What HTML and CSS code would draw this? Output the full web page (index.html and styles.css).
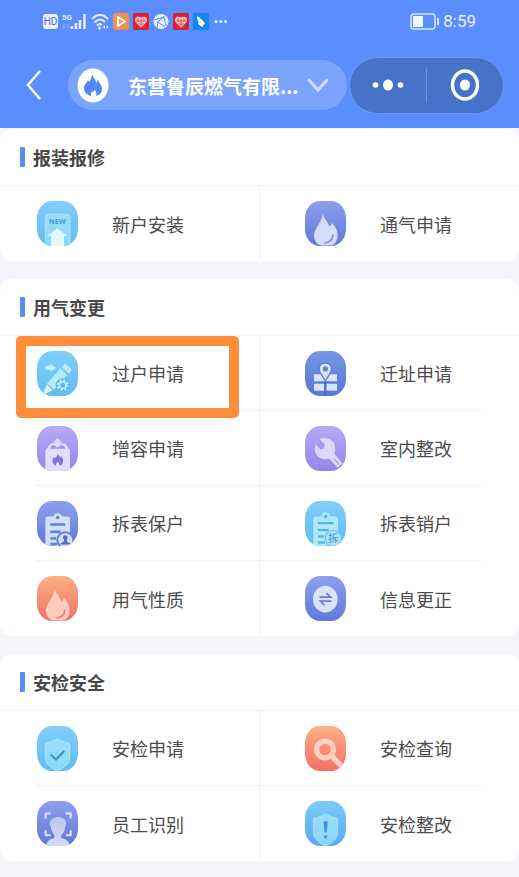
FILE: index.html
```html
<!DOCTYPE html>
<html lang="zh-CN">
<head>
    <meta charset="UTF-8">
    <meta name="viewport" content="width=device-width, initial-scale=1.0">
    <title>燃气服务</title>
    <link rel="stylesheet" href="styles.css">
</head>
<body>
<!-- shared shapes -->
<svg class="sprite" width="0" height="0" aria-hidden="true">
    <defs>
        <linearGradient id="glass" x1="0" y1="0" x2="0" y2="1">
            <stop offset="0" stop-color="#fff" stop-opacity="0.5"/>
            <stop offset="1" stop-color="#fff" stop-opacity="0.75"/>
        </linearGradient>
        <linearGradient id="glassSoft" x1="0" y1="0" x2="0" y2="1">
            <stop offset="0" stop-color="#a5e3fc" stop-opacity="0.8"/>
            <stop offset="1" stop-color="#8bdcfb" stop-opacity="0.9"/>
        </linearGradient>
    </defs>
    <symbol id="flame" viewBox="0 0 123 132">
        <path d="M53 36C56 52 69 59 73 75C78 73 80 70 80 64C90 74 99 86 98 104C97 123 84 135 63 135C40 135 27 121 27 103C27 80 50 66 53 36z"/>
    </symbol>
    <symbol id="heart" viewBox="0 0 16 17">
        <rect width="16" height="17" rx="2" fill="#d8232f"/>
        <path d="M8 15L2.500 9C0.500 5.500 4 2 8 4.500C12 2 15.500 5.500 13.500 9z" fill="#f7c9cc"/>
        <path d="M5 5v4M8 6v7M11 5v4M3 8h10M5 11h6" fill="none" stroke="#d8232f" stroke-width="0.700"/>
    </symbol>
</svg>

<header class="header">
    <div class="status">
        <div class="status-left">
            <svg width="15" height="17" viewBox="0 0 15 17"><rect y="1" width="15" height="15" rx="3" fill="#e9f1ff"/><text x="7.500" y="12" text-anchor="middle" class="hd">HD</text></svg>
            <svg width="25" height="18" viewBox="0 0 25 18"><text x="0" y="8" class="net">5G</text><path d="M2 12v4M0.500 14l1.500 2 1.500-2M6 16v-4" stroke="#8fb2ff" fill="none"/><path d="M10 17v-3M14 17v-6M18 17V8M22.500 17V2" stroke="#e9f1ff" stroke-width="2.500"/></svg>
            <svg width="18" height="17" viewBox="0 0 18 17"><path d="M1 6Q9-2 17 6M3.500 9.500Q9 4 14 9M6 12.500Q8.500 10 11 12" fill="none" stroke="#e9f1ff" stroke-width="2"/><circle cx="8.500" cy="15" r="1.500" fill="#e9f1ff"/><path d="M12 14l2-2v4zM17.500 14l-2-2v4z" fill="#e9f1ff"/></svg>
            <svg width="16" height="17" viewBox="0 0 16 17"><rect width="16" height="17" rx="3" fill="#f2914d"/><path d="M5 4l7 4.500L5 13z" fill="none" stroke="#fff" stroke-width="2" stroke-linejoin="round"/></svg>
            <svg width="16" height="17"><use href="#heart"/></svg>
            <svg width="16" height="17" viewBox="0 0 16 17"><circle cx="8" cy="8.500" r="7.500" fill="#e9f1ff"/><path d="M1 7l10-3 2 9M11 3L5 9l7 5M5 9l-1 6" fill="none" stroke="#5a8dfb"/></svg>
            <svg width="16" height="17"><use href="#heart"/></svg>
            <svg width="16" height="17" viewBox="0 0 16 17"><rect width="16" height="17" rx="1" fill="#1287f0"/><path d="M4 3c3 2 6 4 8 8l-2 1v2c-2-1-4-1-5-4l1-.5C4.500 7.500 4 5.500 4 3z" fill="#fff"/></svg>
            <svg width="14" height="17" viewBox="0 0 14 17"><g fill="#e9f1ff"><circle cx="3" cy="8.500" r="1.500"/><circle cx="8" cy="8.500" r="1.500"/><circle cx="12.500" cy="8.500" r="1.500"/></g></svg>
        </div>
        <div class="status-right">
            <svg width="29" height="17" viewBox="0 0 29 17"><rect x="1" y="1" width="24" height="15" rx="3" fill="none" stroke="#dce8ff" stroke-width="1.500"/><rect x="3" y="3" width="10" height="11" rx="1" fill="#f2f7ff"/><path d="M28 5v7" stroke="#dce8ff" stroke-width="2"/></svg>
            <span class="time">8:59</span>
        </div>
    </div>
    <nav class="navbar">
        <button class="back" aria-label="返回">
            <svg width="16" height="32" viewBox="0 0 16 32"><path d="M14 2L2 16l12 14" fill="none" stroke="#fff" stroke-width="2.500"/></svg>
        </button>
        <button class="company">
            <svg width="32" height="35" viewBox="0 0 32 35"><ellipse cx="16" cy="17.500" rx="15.500" ry="17" fill="#fff"/><path d="M15 6c1 4 4 5 4 9l2-3c2 4 4 6 4 9 0 4-3 6-6 7 1-3 0-4-1-6-1 2-3 1-4 3v3c-4-1-7-4-7-8 0-4 3-5 4-8l1 2c2-3 3-5 3-8z" fill="#5287f5"/></svg>
            <span class="company-name">东营鲁辰燃气有限...</span>
            <svg width="22" height="15" viewBox="0 0 22 15"><path d="M2 2l9 10 9-10" fill="none" stroke="#cfdfff" stroke-width="3" stroke-linecap="round"/></svg>
        </button>
        <div class="capsule">
            <button aria-label="更多">
                <svg width="32" height="14" viewBox="0 0 32 14"><g fill="#fff"><circle cx="3.500" cy="7" r="2.800"/><ellipse cx="16" cy="7" rx="5" ry="5.500"/><circle cx="28.500" cy="7" r="2.800"/></g></svg>
            </button>
            <button aria-label="关闭">
                <svg width="30" height="32" viewBox="0 0 30 32"><ellipse cx="15" cy="16" rx="12.500" ry="14" fill="none" stroke="#fff" stroke-width="3.500"/><ellipse cx="15" cy="16" rx="5" ry="5.500" fill="#fff"/></svg>
            </button>
        </div>
    </nav>
</header>

<main class="content">
    <section class="card">
        <h2>报装报修</h2>
        <div class="grid">
            <a href="#" class="item">
                <svg class="icon sky" viewBox="0 0 123 132"><rect x="25" y="38" width="74" height="110" rx="9" fill="url(#glassSoft)" stroke="#b9edff" stroke-width="2"/><text x="61" y="67" text-anchor="middle" class="new-tag">NEW</text><path d="M61 81L91 103H81V140H42V103H32z" fill="#e6f8ff"/></svg>
                <span>新户安装</span>
            </a>
            <a href="#" class="item">
                <svg class="icon indigo" viewBox="0 0 123 132"><use href="#flame" fill="#d3dcfb"/><path d="M83 101c0 13-9 23-23 23" fill="none" stroke="#7d90e6" stroke-width="5" stroke-linecap="round"/></svg>
                <span>通气申请</span>
            </a>
        </div>
    </section>

    <section class="card">
        <h2>用气变更</h2>
        <div class="grid">
            <a href="#" class="item marked">
                <svg class="icon sky" viewBox="0 0 123 132">
                    <path d="M25 43H41V37L57 49L41 61V55H25z" fill="#c2f1fc"/>
                    <path d="M80 40Q84 35 89 39L102 52Q106 57 101 61L95 67L74 46z" fill="#b5ebfb"/>
                    <path d="M70 50L91 71L51 113L30 96z" fill="#b5ebfb"/>
                    <path d="M29 99L47 116L25 127Q18 126 22 118z" fill="#d6f6fd"/>
                    <circle cx="77" cy="101" r="21" fill="#5cb7e6"/>
                    <circle cx="77" cy="101" r="15" fill="none" stroke="#c2f1fc" stroke-width="6" stroke-dasharray="6 5.780"/>
                    <circle cx="77" cy="101" r="10" fill="none" stroke="#c2f1fc" stroke-width="5"/>
                </svg>
                <span>过户申请</span>
            </a>
            <a href="#" class="item">
                <svg class="icon blue" viewBox="0 0 123 132">
                    <g fill="#d9e4fc"><rect x="27" y="68" width="69" height="21" rx="2"/><rect x="27" y="97" width="69" height="21" rx="2"/></g>
                    <path d="M61 88L46 64C37 46 47 35 61 35S85 46 76 64z" fill="#d9e4fc" stroke="#5c7ed8" stroke-width="4"/>
                    <circle cx="61" cy="52" r="8" fill="#5c82da"/>
                    <path d="M61 90v42" stroke="#4d6cc8" stroke-width="7"/>
                </svg>
                <span>迁址申请</span>
            </a>
            <a href="#" class="item">
                <svg class="icon violet" viewBox="0 0 123 132">
                    <path d="M25 72L39 53Q41 50 45 50H80Q84 50 86 53L99 72V140H25z" fill="#e3dcff"/>
                    <path d="M38 67L45 57H79L86 67z" fill="#9d8eea"/>
                    <path d="M62 35L76 48H68V62H56V48H48z" fill="#e3dcff"/>
                    <path d="M62 79c0 8 7 9 8 15l4-5c8 14 5 25-7 29 1-7-2-9-5-13-3 4-6 6-5 13-13-5-13-17-6-27l3 5c5-5 8-9 8-17z" fill="#8171d8"/>
                </svg>
                <span>增容申请</span>
            </a>
            <a href="#" class="item">
                <svg class="icon violet" viewBox="0 0 123 132"><path d="M44 38L60 54L57 66L46 68L31 53C25 72 34 92 51 97C59 99 67 98 72 96L98 124L113 111L88 82C94 70 91 53 81 43C70 34 55 32 44 38z" fill="#ded7fc"/><path d="M87 97l19 20" stroke="#b4a7f0" stroke-width="4"/></svg>
                <span>室内整改</span>
            </a>
            <a href="#" class="item">
                <svg class="icon indigo" viewBox="0 0 123 132">
                    <rect x="25" y="45" width="74" height="100" rx="7" fill="#d3defa"/>
                    <path d="M42 54V45H51Q51 35 62 35T74 45H83V54z" fill="#d3defa"/>
                    <circle cx="62" cy="48" r="5" fill="#6580dc"/>
                    <path d="M40 69H85M40 91H71M40 111H57M40 128H60" stroke="#6580dc" stroke-width="8"/>
                    <circle cx="85" cy="116" r="27" fill="#6580dc"/><circle cx="85" cy="116" r="21" fill="#d3defa"/>
                    <circle cx="85" cy="108" r="7" fill="#5268cd"/><path d="M82 111h6l2 10 9 4v4H71v-4l9-4z" fill="#5268cd"/>
                </svg>
                <span>拆表保户</span>
            </a>
            <a href="#" class="item">
                <svg class="icon sky" viewBox="0 0 123 132">
                    <rect x="25" y="45" width="74" height="100" rx="7" fill="#aee8fb"/>
                    <path d="M42 54V45H50Q50 32 62 32T75 45H83V54z" fill="#aee8fb"/>
                    <circle cx="62" cy="45" r="5" fill="#50aede"/>
                    <path d="M39 65H85M39 86H71M39 105H57M39 123H60" stroke="#58b5e2" stroke-width="7"/>
                    <circle cx="85" cy="111" r="26" fill="#65bfe9"/><circle cx="85" cy="111" r="23" fill="#a5e4fa"/>
                    <text x="85" y="122" text-anchor="middle" class="chai">拆</text>
                </svg>
                <span>拆表销户</span>
            </a>
            <a href="#" class="item">
                <svg class="icon coral" viewBox="0 0 123 132"><use href="#flame" fill="#ffcdbb"/><path d="M83 101c0 13-9 23-23 23" fill="none" stroke="#f07d6c" stroke-width="5" stroke-linecap="round"/></svg>
                <span>用气性质</span>
            </a>
            <a href="#" class="item">
                <svg class="icon indigo" viewBox="0 0 123 132"><ellipse cx="61" cy="68" rx="37" ry="40" fill="#dbe1fb"/><path d="M44 62H77L64 50M79 74H46L58 86" fill="none" stroke="#6a7bdc" stroke-width="5"/></svg>
                <span>信息更正</span>
            </a>
        </div>
    </section>

    <section class="card">
        <h2>安检安全</h2>
        <div class="grid">
            <a href="#" class="item">
                <svg class="icon sky" viewBox="0 0 123 132"><path d="M61 36C73 44 85 47 98 50V93C98 113 81 124 61 133C41 124 25 113 25 93V50C38 47 50 44 61 36z" fill="url(#glassSoft)" stroke="#bdeffe" stroke-width="2"/><path d="M41 84L57 99L82 73" fill="none" stroke="#3f9dce" stroke-width="7"/></svg>
                <span>安检申请</span>
            </a>
            <a href="#" class="item">
                <svg class="icon coral" viewBox="0 0 123 132"><circle cx="60" cy="69" r="25" fill="none" stroke="#ffcfc0" stroke-width="16"/><path d="M78 87L110 119" stroke="#ffcfc0" stroke-width="16"/></svg>
                <span>安检查询</span>
            </a>
            <a href="#" class="item">
                <svg class="icon indigo" viewBox="0 0 123 132">
                    <path d="M26 51V36H41M86 36H101V51M26 86V101H41M86 101H101V86" fill="none" stroke="#dce4fd" stroke-width="6"/>
                    <path d="M27 140C27 117 39 112 52 110V99C43 92 42 83 42 76C35 73 39 54 49 51C61 44 67 47 75 49C87 52 90 70 84 77C84 87 80 95 73 100V110C87 112 98 117 99 140z" fill="url(#glass)"/>
                </svg>
                <span>员工识别</span>
            </a>
            <a href="#" class="item">
                <svg class="icon azure" viewBox="0 0 123 132"><path d="M61 36C73 44 85 47 98 50V93C98 113 81 124 61 133C41 124 25 113 25 93V50C38 47 50 44 61 36z" fill="url(#glassSoft)" stroke="#b4e7ff" stroke-width="2"/><path d="M56 62Q56 59 62 59T68 62L65 93H59z" fill="#3b93d6"/><circle cx="62" cy="106" r="5" fill="#3b93d6"/></svg>
                <span>安检整改</span>
            </a>
        </div>
    </section>
</main>
</body>
</html>
```

FILE: styles.css
```css
* {
    box-sizing: border-box;
}
body {
    margin: 0;
    background-color: #f5f6fb;
    color: #484848;
    font-family: "Noto Sans CJK SC", sans-serif;
}
button {
    padding: 0;
    border: none;
    background: none;
    color: inherit;
    font-family: inherit;
    cursor: pointer;
}
svg {
    display: block;
    flex-shrink: 0;
}
.sprite {
    position: absolute;
}

/* header */
.header {
    background-color: #5a8dfd;
    color: #fff;
}
.status {
    display: flex;
    justify-content: space-between;
    align-items: center;
    height: 42px;
    padding: 0 43px;
}
.status-left,
.status-right {
    display: flex;
    align-items: center;
    gap: 4px;
}
.hd {
    font: 10px Roboto, sans-serif;
    fill: #3f6fd8;
}
.net {
    font: bold 8px Roboto, sans-serif;
    fill: #e9f1ff;
}
.time {
    font-family: Roboto, sans-serif;
    font-size: 17px;
    color: #e9f1ff;
}
.navbar {
    display: flex;
    align-items: center;
    height: 86px;
    padding: 0 15px 0 26px;
}
.back {
    margin-right: 26px;
}
.company {
    display: flex;
    flex: 1;
    align-items: center;
    height: 50px;
    min-width: 0;
    margin-right: 2px;
    padding: 0 18px 0 9px;
    border-radius: 25px;
    background-color: #7ba4ff;
}
.company-name {
    flex: 1;
    padding-left: 19px;
    font-size: 19px;
    font-weight: bold;
    text-align: left;
    white-space: nowrap;
}
.capsule {
    display: flex;
    align-items: center;
    width: 155px;
    height: 57px;
    border: 1px solid #6e97ec;
    border-radius: 29px;
    background-color: #4673c9;
}
.capsule button {
    display: flex;
    flex: 1;
    justify-content: center;
    align-items: center;
    height: 34px;
}
.capsule button + button {
    border-left: 1px solid #6f95dd;
}

/* cards */
.content {
    display: flex;
    flex-direction: column;
    gap: 18px;
    padding: 1px 0 16px;
}
.card {
    border-radius: 12px;
    background-color: #fff;
}
.card h2 {
    display: flex;
    align-items: center;
    gap: 8px;
    height: 57px;
    margin: 0;
    padding-left: 20px;
    border-bottom: 1px solid #f0f0f2;
    font-size: 18px;
    font-weight: bold;
}
.card h2::before {
    content: "";
    width: 5px;
    height: 20px;
    border-radius: 1px;
    background-color: #5a8cf8;
}
.grid {
    display: grid;
    grid-template-columns: 1fr 1fr;
    padding: 0 38px 0 37px;
}
.item {
    position: relative;
    display: flex;
    align-items: center;
    gap: 34px;
    height: 75px;
    border-bottom: 1px solid #f0f0f2;
    color: #4c4c4c;
    font-size: 18px;
    text-decoration: none;
}
.item:nth-child(even) {
    padding-left: 45px;
    border-left: 1px solid #f0f0f2;
}
.item:nth-last-child(-n+2) {
    border-bottom: none;
}
.marked::after {
    content: "";
    position: absolute;
    inset: 0 20px -8px -21px;
    border: 10px solid #ff8d3c;
    border-radius: 5px;
}

/* icons */
.icon {
    width: 41px;
    height: 45px;
    border-radius: 15px / 17px;
    overflow: hidden;
}
.sky {
    background: linear-gradient(#80cffa, #62bdf0);
}
.azure {
    background: linear-gradient(#7dcbfb, #5aa9f3);
}
.indigo {
    background: linear-gradient(#8e9fee, #6078da);
}
.blue {
    background: linear-gradient(#7796e6, #5577d6);
}
.violet {
    background: linear-gradient(#b9a9f5, #9385ec);
}
.coral {
    background: linear-gradient(#fbb083, #f36f68);
}
.new-tag {
    font: bold 22px "Open Sans", sans-serif;
    fill: #459fd4;
}
.chai {
    font: 30px "Noto Sans CJK SC", sans-serif;
    fill: #3b95c9;
}
```
